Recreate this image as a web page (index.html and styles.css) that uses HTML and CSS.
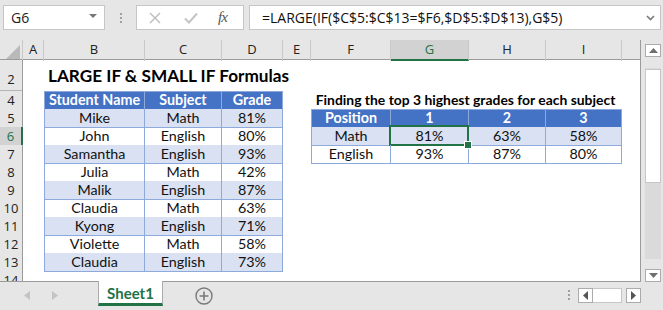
FILE: index.html
```html
<!DOCTYPE html>
<html>
<head>
	<title>LARGE IF &amp; SMALL IF Formulas</title>
	<meta charset="utf-8">
	<link rel="stylesheet" href="styles.css">
</head>
<body>
<div class="app">
	<div class="toolbar">
		<div class="namebox"><span>G6</span><i class="caret"></i></div>
		<div class="grip"><i></i><i></i><i></i></div>
		<div class="fxbox">
			<svg class="ico" width="14" height="14" viewBox="0 0 14 14"><path d="M2 2L12 12M12 2L2 12" stroke="#bcbcbc" stroke-width="1.4" fill="none"/></svg>
			<svg class="ico" width="16" height="14" viewBox="0 0 16 14"><path d="M2 7.5L6 11.5L14 2.5" stroke="#c4c4c4" stroke-width="2" fill="none"/></svg>
			<span class="fx">fx</span>
		</div>
		<div class="formula">
			<span>=LARGE(IF($C$5:$C$13=$F6,$D$5:$D$13),G$5)</span>
			<svg width="9" height="6" viewBox="0 0 9 6"><path d="M1 1L4.5 4.5L8 1" stroke="#7a7a7a" stroke-width="1.6" fill="none"/></svg>
		</div>
	</div>

	<div class="main">
		<div class="sheet">
			<div class="row heads">
				<div class="corner"><svg width="14" height="14" viewBox="0 0 14 14"><path d="M14 0L14 14L0 14Z" fill="#b9b9b9"/></svg></div>
				<div class="ch">A</div>
				<div class="ch">B</div>
				<div class="ch">C</div>
				<div class="ch">D</div>
				<div class="ch">E</div>
				<div class="ch">F</div>
				<div class="ch sel">G</div>
				<div class="ch">H</div>
				<div class="ch">I</div>
				<div class="ch last"></div>
			</div>

			<div class="row r-title">
				<div class="rh">2</div>
				<div></div>
				<div class="title">LARGE IF &amp; SMALL IF Formulas</div>
			</div>
			<div class="row r-hidden"><div class="rh"></div></div>

			<div class="row">
				<div class="rh">4</div>
				<div></div>
				<div class="c th first top">Student Name</div>
				<div class="c th top">Subject</div>
				<div class="c th top">Grade</div>
				<div></div>
				<div class="subtitle">Finding the top 3 highest grades for each subject</div>
			</div>
			<div class="row">
				<div class="rh">5</div>
				<div></div>
				<div class="c band first">Mike</div>
				<div class="c band">Math</div>
				<div class="c band">81%</div>
				<div></div>
				<div class="c th first top">Position</div>
				<div class="c th top">1</div>
				<div class="c th top">2</div>
				<div class="c th top">3</div>
			</div>
			<div class="row">
				<div class="rh sel">6</div>
				<div></div>
				<div class="c first">John</div>
				<div class="c">English</div>
				<div class="c">80%</div>
				<div></div>
				<div class="c band first">Math</div>
				<div class="c band active">81%</div>
				<div class="c band">63%</div>
				<div class="c band">58%</div>
			</div>
			<div class="row">
				<div class="rh">7</div>
				<div></div>
				<div class="c band first">Samantha</div>
				<div class="c band">English</div>
				<div class="c band">93%</div>
				<div></div>
				<div class="c first">English</div>
				<div class="c">93%</div>
				<div class="c">87%</div>
				<div class="c">80%</div>
			</div>
			<div class="row">
				<div class="rh">8</div>
				<div></div>
				<div class="c first">Julia</div>
				<div class="c">Math</div>
				<div class="c">42%</div>
			</div>
			<div class="row">
				<div class="rh">9</div>
				<div></div>
				<div class="c band first">Malik</div>
				<div class="c band">English</div>
				<div class="c band">87%</div>
			</div>
			<div class="row">
				<div class="rh">10</div>
				<div></div>
				<div class="c first">Claudia</div>
				<div class="c">Math</div>
				<div class="c">63%</div>
			</div>
			<div class="row">
				<div class="rh">11</div>
				<div></div>
				<div class="c band first">Kyong</div>
				<div class="c band">English</div>
				<div class="c band">71%</div>
			</div>
			<div class="row">
				<div class="rh">12</div>
				<div></div>
				<div class="c first">Violette</div>
				<div class="c">Math</div>
				<div class="c">58%</div>
			</div>
			<div class="row">
				<div class="rh">13</div>
				<div></div>
				<div class="c band first">Claudia</div>
				<div class="c band">English</div>
				<div class="c band">73%</div>
			</div>
			<div class="row">
				<div class="rh">14</div>
			</div>
		</div>

		<div class="vscroll">
			<div class="sbtn"><svg width="9" height="5" viewBox="0 0 9 5"><path d="M0 5L4.5 0L9 5Z" fill="#6f6f6f"/></svg></div>
			<div class="track"><div class="thumb"></div></div>
			<div class="sbtn"><svg width="9" height="5" viewBox="0 0 9 5"><path d="M0 0L4.5 5L9 0Z" fill="#6f6f6f"/></svg></div>
		</div>
	</div>

	<div class="tabbar">
		<div class="nav">
			<svg width="6" height="9" viewBox="0 0 6 9"><path d="M6 0L0 4.5L6 9Z" fill="#c4c4c4"/></svg>
			<svg width="6" height="9" viewBox="0 0 6 9"><path d="M0 0L6 4.5L0 9Z" fill="#c4c4c4"/></svg>
		</div>
		<div class="tab">Sheet1</div>
		<div class="addsheet">
			<svg width="18" height="18" viewBox="0 0 18 18"><circle cx="9" cy="9" r="8" stroke="#7a7a7a" stroke-width="1.4" fill="none"/><path d="M9 4.5V13.5M4.5 9H13.5" stroke="#7a7a7a" stroke-width="1.6"/></svg>
		</div>
		<div class="spacer"></div>
		<div class="grip small"><i></i><i></i><i></i></div>
		<div class="hscroll">
			<div class="hbtn"><svg width="5" height="9" viewBox="0 0 5 9"><path d="M5 0L0 4.5L5 9Z" fill="#555"/></svg></div>
			<div class="hthumb"></div>
			<div class="hbtn right"><svg width="5" height="9" viewBox="0 0 5 9"><path d="M0 0L5 4.5L0 9Z" fill="#555"/></svg></div>
		</div>
	</div>
</div>
</body>
</html>
```

FILE: styles.css
```css
*{
	box-sizing: border-box;
}
body{
	margin: 0;
	background: #e6e6e6;
	font-family: "Lato", "Liberation Sans", sans-serif;
	color: #111;
}
.app{
	width: 663px;
	height: 310px;
	overflow: hidden;
	background: #e6e6e6;
}

/* formula bar */
.toolbar{
	height: 40px;
	display: flex;
	align-items: flex-start;
	padding: 5px 2px 0 3px;
}
.namebox{
	width: 102px;
	height: 25px;
	background: #fff;
	border: 1px solid #c6c6c6;
	display: flex;
	align-items: center;
	justify-content: space-between;
	padding: 0 5px 0 7px;
	font: 14px "Open Sans", sans-serif;
	color: #222;
}
.caret{
	width: 0;
	height: 0;
	border-left: 4px solid transparent;
	border-right: 4px solid transparent;
	border-top: 4px solid #777;
	margin-right: 2px;
	margin-top: -3px;
}
.grip{
	width: 31px;
	height: 25px;
	display: flex;
	flex-direction: column;
	align-items: center;
	justify-content: center;
	gap: 2px;
}
.grip i{
	width: 2px;
	height: 2px;
	background: #a0a0a0;
}
.fxbox{
	width: 108px;
	height: 25px;
	background: #fff;
	border: 1px solid #c6c6c6;
	display: flex;
	align-items: center;
	padding-left: 11px;
	gap: 21px;
}
.fx{
	font: italic 15px "Liberation Serif", serif;
	color: #555;
	letter-spacing: -1px;
	margin-left: -2px;
}
.formula{
	flex: 1;
	height: 25px;
	margin-left: 5px;
	background: #fff;
	border: 1px solid #c6c6c6;
	display: flex;
	align-items: center;
	justify-content: space-between;
	padding: 0 5px 0 12px;
	font: 14px "Open Sans", sans-serif;
	color: #111;
}

/* sheet */
.main{
	display: flex;
	height: 242px;
}
.sheet{
	width: 641px;
	background: #fff;
	border-right: 1px solid #9b9b9b;
	border-bottom: 1px solid #9b9b9b;
	overflow: hidden;
}
.row{
	display: grid;
	grid-template-columns: 23px 21px 101px 77px 61px 28px 80px 78px 77px 76px 18px;
	height: 18px;
	font-size: 14.3px;
}
.heads{
	height: 20px;
	background: #e6e6e6;
	border-bottom: 1px solid #9b9b9b;
	font: 13px "Open Sans", sans-serif;
	color: #222;
}
.corner{
	border-right: 1px solid #c9c9c9;
	display: flex;
	align-items: flex-end;
	justify-content: flex-end;
	padding: 0 2px 2px 0;
}
.ch{
	border-right: 1px solid #c9c9c9;
	text-align: center;
	line-height: 19px;
}
.ch.last{
	border-right: 0;
}
.ch.sel{
	background: #d2d2d2;
	color: #217346;
	border-bottom: 2px solid #217346;
	line-height: 19px;
}
.rh{
	background: #e6e6e6;
	border-right: 1px solid #9b9b9b;
	border-bottom: 1px solid #d4d4d4;
	font: 13px "Open Sans", sans-serif;
	color: #222;
	text-align: center;
	line-height: 18px;
}
.rh.sel{
	background: #d2d2d2;
	color: #217346;
	border-right: 2px solid #217346;
}
.r-title{
	height: 28px;
}
.r-title .rh{
	line-height: 39px;
}
.r-hidden{
	height: 3px;
}
.r-hidden .rh{
	border-bottom: 1px solid #b5b5b5;
}
.title{
	grid-column: 3 / 6;
	text-align: center;
	font-weight: bold;
	font-size: 17.2px;
	line-height: 31px;
	white-space: nowrap;
	color: #000;
	padding-left: 4px;
}
.subtitle{
	grid-column: 7 / 11;
	text-align: center;
	font-weight: bold;
	font-size: 13.9px;
	white-space: nowrap;
	line-height: 18px;
	color: #000;
	margin-left: -2px;
}

/* table cells */
.c{
	position: relative;
	text-align: center;
	line-height: 18px;
	border-right: 1px solid #8ea9db;
	border-bottom: 1px solid #8ea9db;
	white-space: nowrap;
	color: #111;
}
.c.first{
	border-left: 1px solid #8ea9db;
}
.c.top{
	border-top: 1px solid #8ea9db;
	line-height: 16px;
}
.th{
	background: #4472c4;
	color: #fff;
	font-weight: bold;
}
.band{
	background: #d9e1f2;
}
.active::after{
	content: "";
	position: absolute;
	left: -2px;
	top: -2px;
	right: -1px;
	bottom: -1px;
	border: 2px solid #217346;
}
.active::before{
	content: "";
	position: absolute;
	right: -4px;
	bottom: -4px;
	width: 6px;
	height: 6px;
	background: #217346;
	border: 1px solid #fff;
	z-index: 2;
}

/* vertical scroll */
.vscroll{
	width: 22px;
	padding: 4px 2px 0 4px;
	display: flex;
	flex-direction: column;
}
.sbtn{
	height: 13px;
	background: #fff;
	border: 1px solid #ababab;
	display: flex;
	align-items: center;
	justify-content: center;
}
.track{
	flex: 1;
	background: #dadada;
	margin: 11px 0 10px;
	padding-top: 1px;
}
.thumb{
	height: 114px;
	background: #fff;
	border: 1px solid #c6c6c6;
}

/* sheet tabs */
.tabbar{
	height: 28px;
	display: flex;
	align-items: flex-start;
}
.nav{
	width: 98px;
	height: 26px;
	display: flex;
	align-items: center;
	gap: 22px;
	padding-left: 24px;
}
.tab{
	width: 65px;
	height: 25px;
	margin-top: -1px;
	background: #fff;
	border-left: 1px solid #ababab;
	border-right: 1px solid #ababab;
	border-bottom: 3px solid #217346;
	color: #217346;
	font-weight: bold;
	font-size: 15px;
	text-align: center;
	line-height: 24px;
}
.addsheet{
	margin: 5px 0 0 32px;
}
.spacer{
	flex: 1;
}
.grip.small{
	width: 12px;
	height: 14px;
	margin-top: 6px;
}
.hscroll{
	display: flex;
	margin: 6px 22px 0 3px;
	height: 15px;
}
.hbtn{
	width: 15px;
	height: 15px;
	background: #fff;
	border: 1px solid #ababab;
	display: flex;
	align-items: center;
	justify-content: center;
}
.hbtn.right{
	margin-left: 4px;
}
.hthumb{
	width: 29px;
	background: #fff;
	border: 1px solid #c6c6c6;
	border-left: 0;
}
```
